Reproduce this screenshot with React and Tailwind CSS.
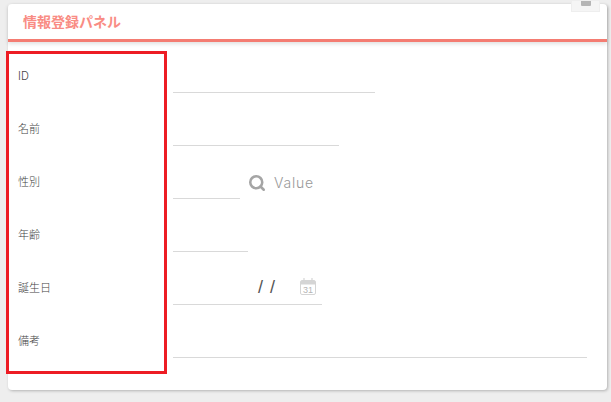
// 情報登録パネル — registration form panel
import React from 'react';
import { Search } from 'lucide-react';

const ROWS = [
  { label: 'ID', width: 'w-[202px]' },
  { label: '名前', width: 'w-[166px]' },
  { label: '性別', width: 'w-[67px]', lookup: true },
  { label: '年齢', width: 'w-[75px]' },
  { label: '誕生日', width: 'w-[149px]', date: true },
  { label: '備考', width: 'w-[414px]' },
];

function CalendarIcon() {
  return (
    <svg width="16" height="17" viewBox="0 0 16 17" fill="none" className="text-[#d5d5d5]">
      <rect x="0.5" y="2.5" width="15" height="14" rx="1.5" stroke="currentColor" />
      <rect x="1" y="3" width="14" height="3.5" fill="currentColor" />
      <path d="M4 0v3M12 0v3" stroke="currentColor" strokeWidth="1.2" />
      <text x="8" y="14.8" textAnchor="middle" fontSize="9" fill="#b5b5b5" fontFamily="Liberation Sans, sans-serif">31</text>
    </svg>
  );
}

function Row({ width, lookup, date }) {
  return (
    <div className="flex h-[53px]">
      <div className={`${width} h-[53px] border-b border-[#d9d9d9] flex-shrink-0`}>
        {date && (
          <div className="flex items-center justify-end h-full pr-[6px] pt-[17px] gap-[25px]">
            <span className="flex gap-[7px] text-[18px] leading-none text-[#555] font-['Liberation_Sans',sans-serif]">
              <span>/</span>
              <span>/</span>
            </span>
            <CalendarIcon />
          </div>
        )}
      </div>
      {lookup && (
        <div className="flex items-center gap-[8px] ml-[8px] pt-[20px] h-[53px] text-[#999]">
          <Search className="w-[18px] h-[18px] text-[#a5a5a5]" strokeWidth={3.4} />
          <span className="text-[14px] font-light tracking-[0.8px] font-['Inter',sans-serif]">Value</span>
        </div>
      )}
    </div>
  );
}

export default function App() {
  return (
    <div className="w-[611px] h-[402px] bg-[#eeeeee] overflow-hidden pt-[4px] pl-[8px] relative font-['Inter','Noto_Sans_CJK_JP',sans-serif]">
      <div className="w-[599px] h-[386px] bg-white rounded-[4px] shadow-[1px_1px_3px_rgba(0,0,0,0.25)]">
        {/* Header */}
        <div className="h-[35px] flex items-center pl-[15px] border-b-[3px] border-[#f47c72] box-content shadow-[0_2px_4px_rgba(0,0,0,0.12)]">
          <span className="text-[14px] font-bold text-[#f98c84]">情報登録パネル</span>
        </div>

        {/* Body */}
        <div className="flex mt-[9px] -ml-[2px]">
          {/* Highlighted labels */}
          <div className="w-[161px] h-[323px] border-[3px] border-[#ed1c24] flex-shrink-0 pl-[9px] overflow-hidden">
            <div className="-mt-[4px] flex flex-col">
              {ROWS.map(({ label }) => (
                <div key={label} className="h-[53px] flex-shrink-0 flex items-center text-[11px] font-light text-[#444]">
                  {label}
                </div>
              ))}
            </div>
          </div>
          <div className="ml-[6px] -mt-[11px] flex flex-col">
            {ROWS.map((row) => (
              <Row key={row.label} {...row} />
            ))}
          </div>
        </div>
      </div>

      {/* Floating tab at the top right */}
      <div className="absolute right-[11px] top-0 w-[29px] h-[12px] bg-[#f5f5f5] border border-[#eeeeee] flex justify-center overflow-hidden">
        <div className="w-[10px] h-[5px] bg-[#b5b5b5] rounded-b-[1px]" />
      </div>
    </div>
  );
}
